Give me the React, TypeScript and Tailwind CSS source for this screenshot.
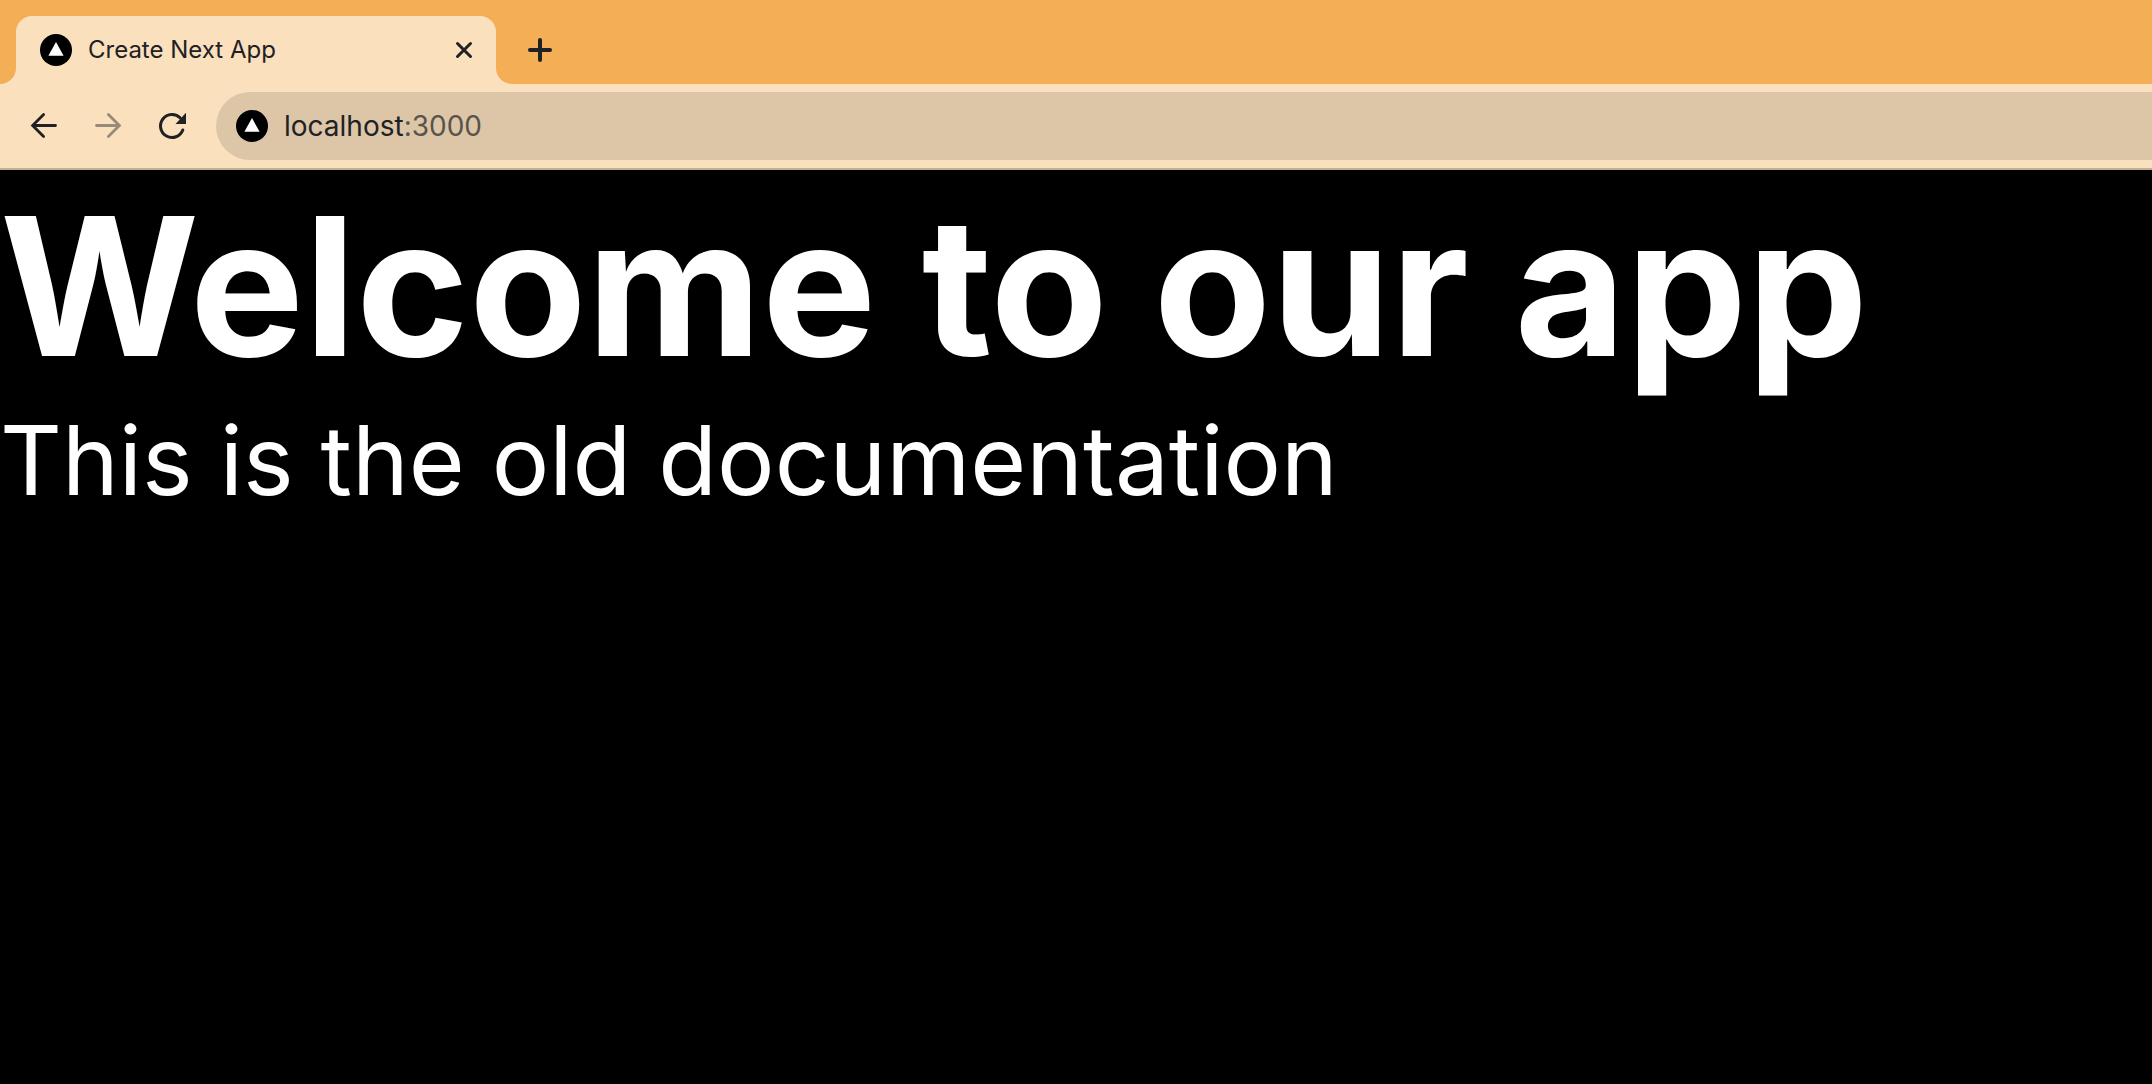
import React from "react";

function Favicon() {
  return (
    <svg className="size-8 shrink-0" viewBox="0 0 32 32" aria-hidden="true">
      <circle cx="16" cy="16" r="16" fill="#000" />
      <path d="M16 8 L23.6 21.8 H8.4 Z" fill="#fff" />
    </svg>
  );
}

function ArrowIcon({ flipped = false }: { flipped?: boolean }) {
  return (
    <svg className="size-8" viewBox="0 0 32 32" fill="none" stroke="currentColor" strokeWidth="2.8" aria-hidden="true">
      <path
        d={flipped ? "M4.5 15.5H27M16.4 4.5 27.4 15.5 16.4 26.5" : "M27.5 15.5H5M15.6 4.5 4.6 15.5 15.6 26.5"}
        strokeLinecap="round"
      />
    </svg>
  );
}

function ReloadIcon() {
  return (
    <svg className="size-8" viewBox="0 0 32 32" aria-hidden="true">
      <path
        d="M26.8 20A11.5 11.5 0 1 1 24.3 8"
        fill="none"
        stroke="currentColor"
        strokeWidth="3"
        strokeLinecap="round"
      />
      <path d="M30 2.8V14H19.5Z" fill="currentColor" />
    </svg>
  );
}

function CornerFlare({ side }: { side: "left" | "right" }) {
  return (
    <svg className="size-4 shrink-0 self-end" viewBox="0 0 16 16" aria-hidden="true">
      <path d={side === "left" ? "M16 0A16 16 0 0 1 0 16H16Z" : "M0 0A16 16 0 0 0 16 16H0Z"} fill="#fae0bd" />
    </svg>
  );
}

function TabStrip() {
  return (
    <div className="flex bg-[#f4ae55] pt-4">
      <CornerFlare side="left" />
      <div className="flex h-[68px] w-[480px] items-center gap-4 rounded-t-2xl bg-[#fae0bd] pr-5 pl-6">
        <Favicon />
        <span className="flex-1 text-[24px] leading-8">Create Next App</span>
        <button type="button" aria-label="Close tab" className="flex size-6 items-center justify-center">
          <svg className="size-6" viewBox="0 0 24 24" stroke="currentColor" strokeWidth="3" strokeLinecap="round" aria-hidden="true">
            <path d="M5.5 5.5 18.5 18.5M18.5 5.5 5.5 18.5" />
          </svg>
        </button>
      </div>
      <CornerFlare side="right" />
      <button type="button" aria-label="New tab" className="ml-4 flex h-[68px] items-center">
        <svg className="size-6" viewBox="0 0 24 24" stroke="currentColor" strokeWidth="4" strokeLinecap="round" aria-hidden="true">
          <path d="M2 12H22M12 2V22" />
        </svg>
      </button>
    </div>
  );
}

function Toolbar() {
  return (
    <div className="flex items-center border-b-2 border-[#c1b08f] bg-[#fae0bd] py-2 pl-7">
      <nav aria-label="History" className="flex gap-8">
        <button type="button" aria-label="Back">
          <ArrowIcon />
        </button>
        <button type="button" aria-label="Forward" className="text-[#988a78]">
          <ArrowIcon flipped />
        </button>
        <button type="button" aria-label="Reload">
          <ReloadIcon />
        </button>
      </nav>
      <div className="ml-7 flex h-[68px] flex-1 items-center gap-4 rounded-l-full bg-[#dcc6a7] pl-5">
        <Favicon />
        <a href="http://localhost:3000" className="text-[28px] leading-9">
          localhost<span className="text-[#5a534b]">:3000</span>
        </a>
      </div>
    </div>
  );
}

export default function App() {
  return (
    <div className="flex min-h-screen flex-col bg-black font-['Inter',sans-serif] text-[#202124]">
      <header>
        <TabStrip />
        <Toolbar />
      </header>
      <main className="flex-1 overflow-hidden text-white">
        <h1 className="text-[192px] leading-[232px] font-bold">Welcome to our app</h1>
        <p className="text-[96px] leading-[116px]">This is the old documentation</p>
      </main>
    </div>
  );
}
